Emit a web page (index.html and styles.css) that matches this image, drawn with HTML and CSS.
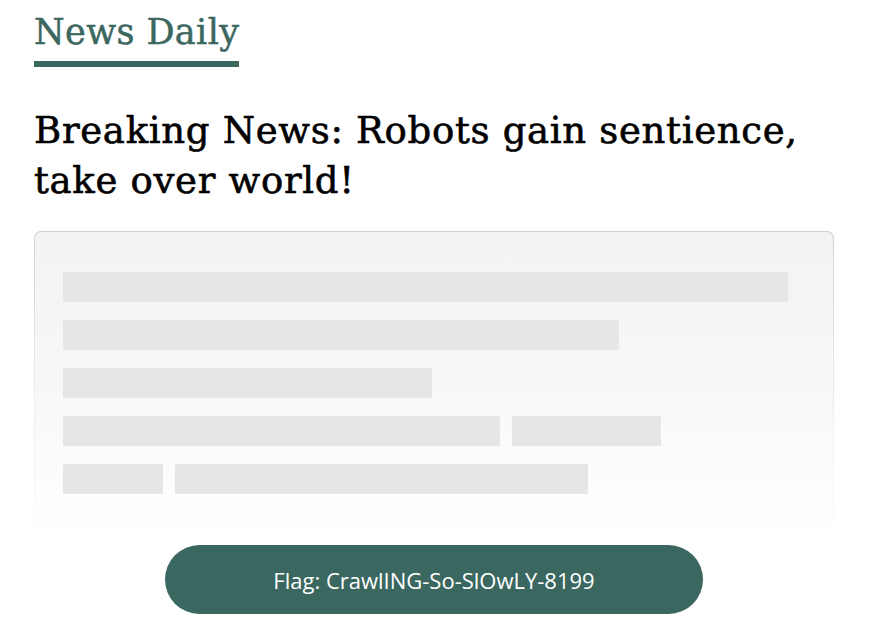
FILE: index.html
```html
<!DOCTYPE html>
<html lang="en">
<head>
<meta charset="utf-8">
<title>News Daily</title>
<link rel="stylesheet" href="styles.css">
</head>
<body>
<div class="page">
  <header class="masthead">
    <h1 class="brand">News Daily</h1>
  </header>
  <h2 class="headline">Breaking News: Robots gain sentience, take over world!</h2>
  <div class="card-frame">
    <div class="card">
      <div class="row"><span class="bar" style="width:725px"></span></div>
      <div class="row"><span class="bar" style="width:556px"></span></div>
      <div class="row"><span class="bar" style="width:369px"></span></div>
      <div class="row"><span class="bar" style="width:437px"></span><span class="bar" style="width:149px"></span></div>
      <div class="row"><span class="bar" style="width:100px"></span><span class="bar" style="width:413px"></span></div>
    </div>
  </div>
  <div class="action">
    <button class="flag-btn">Flag: CrawlING-So-SlOwLY-8199</button>
  </div>
</div>
</body>
</html>
```

FILE: styles.css
```css
html, body {
  margin: 0;
  padding: 0;
  background: #ffffff;
}

.page {
  padding: 0 47px 0 34px;
}

.masthead {
  padding-top: 11px;
}

.brand {
  display: inline-block;
  margin: 0;
  font-family: "DejaVu Serif", "Liberation Serif", serif;
  font-weight: normal;
  font-size: 35px;
  letter-spacing: 0.4px;
  -webkit-text-stroke: 0.5px #3b675f;
  line-height: 42px;
  color: #3b675f;
  padding-bottom: 8px;
  border-bottom: 6px solid #3b675f;
}

.headline {
  margin: 39px 0 25px;
  font-family: "DejaVu Serif", "Liberation Serif", serif;
  font-weight: normal;
  font-size: 37px;
  letter-spacing: 0.7px;
  -webkit-text-stroke: 0.6px #000000;
  line-height: 50px;
  color: #000000;
}

.card-frame {
  padding: 1px 1px 0 1px;
  border-radius: 7px 7px 0 0;
  background: linear-gradient(to bottom, #cfcfcf 0%, #e8e8e8 45%, #fdfdfd 100%);
}

.card {
  border-radius: 6px 6px 0 0;
  background: linear-gradient(to bottom, #f3f3f3 0%, #f7f7f7 45%, #ffffff 100%);
  padding: 40px 28px 44px;
  display: flex;
  flex-direction: column;
  gap: 18px;
}

.row {
  display: flex;
  gap: 12px;
}

.bar {
  display: block;
  height: 30px;
  background: #e6e6e6;
}

.action {
  display: flex;
  justify-content: flex-start;
  padding-left: 131px;
  padding-top: 7px;
}

.flag-btn {
  width: 538px;
  height: 69px;
  border: none;
  border-radius: 35px;
  background: #3a675f;
  color: #ffffff;
  font-family: "Open Sans", "Noto Sans", sans-serif;
  font-size: 22px;
  padding: 0;
}
```
